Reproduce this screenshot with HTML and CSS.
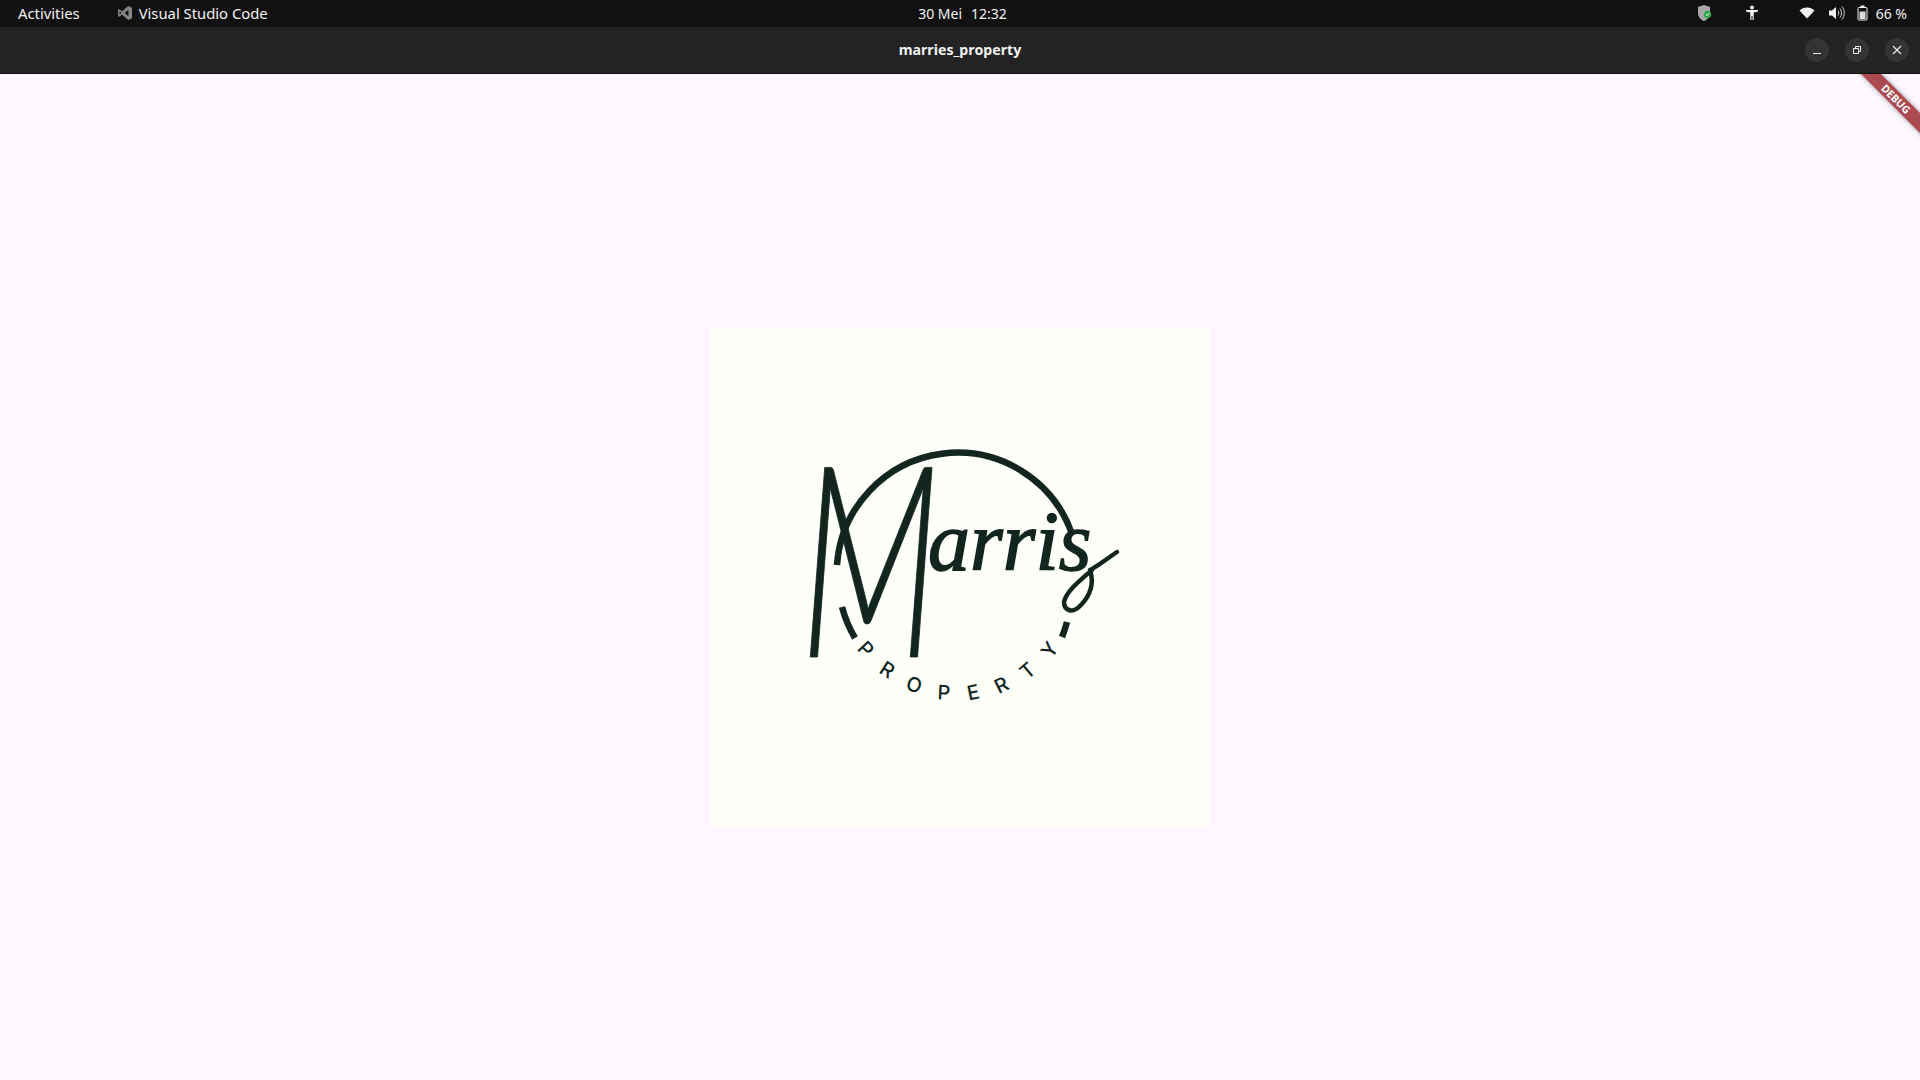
FILE: index.html
```html
<!DOCTYPE html>
<html lang="id">
<head>
<meta charset="utf-8">
<title>marries_property</title>
<link rel="stylesheet" href="styles.css">
</head>
<body>
<header class="topbar">
  <div class="topbar-left">
    <span class="activities">Activities</span>
    <span class="app">
      <svg class="vscode" width="16" height="16" viewBox="0 0 16 16"><path fill="#858585" d="M11.200 1 15 2.800v10.400L11.200 15 5 9.600 2.300 11.700 1 11V5l1.300-.7L5 6.400 11.200 1ZM11.400 4.800 7.600 8l3.800 3.200V4.800ZM2.600 6.200v3.600L4.400 8 2.600 6.200Z"/></svg>
      <span>Visual Studio Code</span>
    </span>
  </div>
  <div class="clock"><span>30 Mei</span><span>12:32</span></div>
  <div class="tray">
    <svg class="tray-shield" width="16" height="18" viewBox="0 0 16 18"><path fill="#a8a8a8" d="M7 1 13 3v6c0 4-2.600 6.600-6 8-3.400-1.400-6-4-6-8V3l6-2Z"/><circle cx="10.500" cy="10.500" r="3.700" fill="#2fa84f"/><path d="m8.800 10.500 1.300 1.200 2.100-2.300" fill="none" stroke="#fff" stroke-width="1"/></svg>
    <svg class="tray-person" width="14" height="16" viewBox="0 0 14 16"><circle cx="7" cy="2.500" r="1.900" fill="#f2f2f2"/><path fill="#f2f2f2" d="M1 5h12v1.500L8.700 7.500V15H7.500v-4h-1v4H5.300V7.500L1 6.500V5Z"/></svg>
    <svg class="tray-wifi" width="16" height="14" viewBox="0 0 16 14"><path fill="#f2f2f2" d="M.5 4.500C2.500 2.500 5 1.500 8 1.500s5.500 1 7.500 3L8 12.500.5 4.500Z"/></svg>
    <svg class="tray-sound" width="17" height="16" viewBox="0 0 17 16"><path fill="#f2f2f2" d="M1 5.500h3L8 2v12l-4-3.500H1v-5Z"/><path fill="none" stroke="#d0d0d0" d="M10 5.500c1 1.500 1 3.500 0 5M12 3.500c2 2.500 2 6.500 0 9M14 1.500c3 3.500 3 9.500 0 13"/></svg>
    <svg class="tray-battery" width="11" height="16" viewBox="0 0 11 16"><path fill="none" stroke="#f2f2f2" d="M1 3.500a1 1 0 0 1 1-1h7a1 1 0 0 1 1 1v10.500a1 1 0 0 1-1 1H2a1 1 0 0 1-1-1V3.500Z"/><rect x="3.500" y=".5" width="4" height="2" fill="#f2f2f2"/><rect x="2.500" y="6.500" width="6" height="7.500" fill="#dcdcdc"/></svg>
    <span class="battery-text">66 %</span>
  </div>
</header>
<div class="titlebar">
  <span class="title">marries_property</span>
  <div class="controls">
    <button class="control"><svg width="10" height="10" viewBox="0 0 10 10"><path d="M1 8.500h8" stroke="#eee" stroke-width="1"/></svg></button>
    <button class="control"><svg width="10" height="10" viewBox="0 0 10 10"><path d="M1.500 3.500h5v5h-5zM3.500 3.500v-2h5v5h-2" fill="none" stroke="#eee"/></svg></button>
    <button class="control"><svg width="10" height="10" viewBox="0 0 10 10"><path d="m1 1 8 8M9 1 1 9" stroke="#eee" stroke-width="1.100"/></svg></button>
  </div>
</div>
<main class="content">
  <div class="splash">
    <svg class="logo" width="500" height="500" viewBox="710 327 500 500">
      <defs><path id="ring" d="M833 575A125 125 0 0 0 1083 575"/></defs>
      <path class="arc" d="M1072 534A121 121 0 0 0 837 565"/>
      <path class="arc" d="M842 607A121 121 0 0 0 855 638"/>
      <path class="arc" d="M1067 622A121 121 0 0 1 1062 637"/>
      <text class="script-m" transform="translate(800 657) scale(.62 1)">M</text>
      <text class="script-rest" x="928" y="570">arris</text>
      <path class="flourish" d="M1117 552C1105 560 1098 566 1090 570C1094 582 1092 594 1080 606C1072 614 1064 610 1064 602C1066 592 1078 582 1092 570"/>
      <text class="ring-text"><textPath href="#ring" startOffset="206">PROPERTY</textPath></text>
    </svg>
  </div>
  <div class="debug-banner"><span class="debug-label">DEBUG</span></div>
</main>
</body>
</html>
```

FILE: styles.css
```css
* { box-sizing: border-box; }
html, body { margin: 0; height: 100%; overflow: hidden; }
body {
  display: flex;
  flex-direction: column;
  font-family: "Noto Sans", "Open Sans", sans-serif;
  background: #fef7ff;
}
.topbar {
  height: 27px;
  flex: none;
  background: #111111;
  color: #f2f2f2;
  font-size: 14.800px;
  display: grid;
  grid-template-columns: 1fr auto 1fr;
  align-items: center;
  padding: 0 13px 1px 18px;
}
.topbar-left { display: flex; align-items: center; gap: 37px; }
.app { display: flex; align-items: center; gap: 6px; }
.clock { display: flex; gap: 9px; font-size: 14px; }
.tray { display: flex; align-items: center; justify-content: flex-end; }
.tray-shield { margin-right: 32px; }
.tray-person { margin-right: 40px; }
.tray-wifi { margin-right: 13px; }
.tray-sound { margin-right: 12px; }
.tray-battery { margin-right: 8px; }
.battery-text { font-size: 14px; }
.titlebar {
  height: 47px;
  flex: none;
  background: #232323;
  border-bottom: 1px solid #0e0e0e;
  display: flex;
  align-items: center;
  justify-content: center;
  position: relative;
}
.title { color: #f4f4f4; font-weight: 700; font-size: 14.200px; margin-top: -2px; }
.controls {
  position: absolute;
  right: 11px;
  top: 11px;
  display: flex;
  gap: 16px;
}
.control {
  width: 24px;
  height: 24px;
  border: 0;
  padding: 0;
  border-radius: 50%;
  background: #343434;
  display: flex;
  align-items: center;
  justify-content: center;
}
.content {
  flex: 1;
  position: relative;
  overflow: hidden;
  display: flex;
  align-items: center;
  justify-content: center;
}
.splash { width: 500px; height: 500px; background: #fffff9; }
.logo { display: block; }
.arc { fill: none; stroke: #12261f; stroke-width: 6.500; }
.flourish { fill: none; stroke: #12261f; stroke-width: 4.500; stroke-linecap: round; stroke-linejoin: round; }
.script-m {
  font-family: "Lato", sans-serif;
  font-style: italic;
  font-weight: 300;
  font-size: 268px;
  fill: #12261f;
  stroke: #12261f;
  stroke-width: 1px;
}
.script-rest {
  font-family: "Liberation Serif", serif;
  font-style: italic;
  font-size: 84px;
  fill: #12261f;
  stroke: #12261f;
  stroke-width: 1.500px;
}
.ring-text {
  font-family: "Inter", sans-serif;
  font-size: 20px;
  font-weight: 500;
  letter-spacing: 18.500px;
  text-anchor: middle;
  fill: #12261f;
}
.debug-banner {
  position: absolute;
  top: 0;
  right: 0;
  width: 0;
  height: 0;
}
.debug-label {
  position: absolute;
  left: -74.500px;
  top: 17.500px;
  width: 100px;
  height: 14px;
  transform: rotate(45deg);
  background: #ab4a50;
  box-shadow: 0 0 5px rgba(0, 0, 0, .4);
  color: #fff;
  font: 700 10.500px/14px "Noto Sans", sans-serif;
  text-align: center;
}
```
